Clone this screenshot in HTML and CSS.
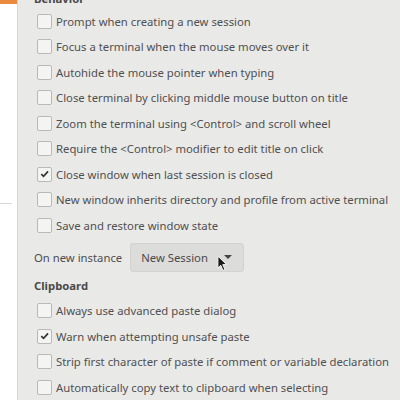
FILE: index.html
```html
<!DOCTYPE html>
<html>
<head>
<meta charset="utf-8">
<link rel="stylesheet" href="styles.css">
</head>
<body>
<div class="window">
  <aside class="sidebar">
    <div class="accent"></div>
    <div class="sep"></div>
  </aside>
  <main class="content">
    <div class="section-title first">Behavior</div>
    <label class="row"><span class="box"></span>Prompt when creating a new session</label>
    <label class="row"><span class="box"></span>Focus a terminal when the mouse moves over it</label>
    <label class="row"><span class="box"></span>Autohide the mouse pointer when typing</label>
    <label class="row"><span class="box"></span>Close terminal by clicking middle mouse button on title</label>
    <label class="row"><span class="box"></span>Zoom the terminal using &lt;Control&gt; and scroll wheel</label>
    <label class="row"><span class="box"></span>Require the &lt;Control&gt; modifier to edit title on click</label>
    <label class="row"><span class="box checked"><svg viewBox="0 0 14 14" width="14" height="14"><path d="M3.5 7.2 L6 9.6 L10.8 4.2" fill="none" stroke="#333" stroke-width="1.8"/></svg></span>Close window when last session is closed</label>
    <label class="row"><span class="box"></span>New window inherits directory and profile from active terminal</label>
    <label class="row"><span class="box"></span>Save and restore window state</label>
    <div class="instance">
      <span class="instance-label">On new instance</span>
      <div class="combo">
        <span class="combo-text">New Session</span>
        <svg class="caret" viewBox="0 0 8 4" width="8" height="4"><path d="M0 0 L8 0 L4 4 Z" fill="#444"/></svg>
        <svg class="cursor" viewBox="0 0 12 18" width="11" height="17"><path d="M1 1 L1 14 L4.2 11 L6.5 16.5 L8.6 15.6 L6.3 10.2 L10.5 10.2 Z" fill="#1a1a1a" stroke="#fff" stroke-width="1"/></svg>
      </div>
    </div>
    <div class="section-title">Clipboard</div>
    <label class="row"><span class="box"></span>Always use advanced paste dialog</label>
    <label class="row"><span class="box checked"><svg viewBox="0 0 14 14" width="14" height="14"><path d="M3.5 7.2 L6 9.6 L10.8 4.2" fill="none" stroke="#333" stroke-width="1.8"/></svg></span>Warn when attempting unsafe paste</label>
    <label class="row"><span class="box"></span>Strip first character of paste if comment or variable declaration</label>
    <label class="row"><span class="box"></span>Automatically copy text to clipboard when selecting</label>
  </main>
</div>
</body>
</html>
```
FILE: styles.css
```css
html, body {
  margin: 0;
  padding: 0;
  width: 400px;
  height: 400px;
  overflow: hidden;
  background: #e9e9e8;
  font-family: "Noto Sans", "Open Sans", sans-serif;
  font-size: 11.3px;
  color: #505050;
}
.window {
  display: flex;
  height: 400px;
}
.sidebar {
  width: 17px;
  flex: none;
  background: #ffffff;
  border-right: 1px solid #d6d6d4;
  display: flex;
  flex-direction: column;
}
.accent {
  height: 4px;
  background: #e98a3c;
}
.sep {
  margin-top: 199px;
  height: 1px;
  width: 12px;
  background: #d8d8d8;
}
.content {
  flex: 1;
  display: flex;
  flex-direction: column;
  padding-left: 16px;
  margin-top: -8px;
  white-space: nowrap;
}
.section-title {
  font-weight: bold;
  color: #4a4a4a;
  height: 25px;
  line-height: 25px;
}
.section-title.first {
  height: 17px;
  line-height: 14px;
}
.row {
  display: flex;
  align-items: center;
  gap: 4px;
  height: 26.7px;
  padding-left: 3px;
}
.box {
  width: 13px;
  height: 13px;
  border: 1px solid #b9b9b7;
  border-radius: 2px;
  background: #f4f4f3;
  box-sizing: content-box;
  flex: none;
  display: flex;
  align-items: center;
  justify-content: center;
}
.box svg {
  display: block;
}
.instance {
  display: flex;
  align-items: center;
  gap: 8px;
  height: 30px;
  margin-top: 5px;
  margin-bottom: 1px;
}
.instance-label {
  color: #4e4e4e;
}
.combo {
  position: relative;
  display: flex;
  align-items: center;
  height: 29px;
  width: 114px;
  box-sizing: border-box;
  padding-left: 10px;
  background: #dcdcdb;
  border: 1px solid #d2d2d0;
  border-radius: 3px;
  color: #4a4a4a;
}
.caret {
  margin-left: 16px;
}
.cursor {
  position: absolute;
  left: 86px;
  top: 11px;
}
```
